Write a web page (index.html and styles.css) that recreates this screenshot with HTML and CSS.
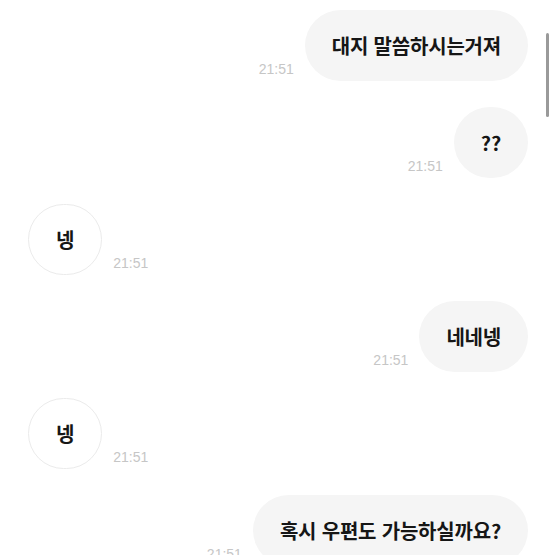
FILE: index.html
```html
<!DOCTYPE html>
<html lang="ko">
<head>
<meta charset="utf-8">
<link rel="stylesheet" href="styles.css">
</head>
<body>
<div class="chat">
  <div class="row me"><span class="time">21:51</span><div class="bubble">대지 말씀하시는거져</div></div>
  <div class="row me"><span class="time">21:51</span><div class="bubble">??</div></div>
  <div class="row them"><div class="bubble">넹</div><span class="time">21:51</span></div>
  <div class="row me"><span class="time">21:51</span><div class="bubble">네네넹</div></div>
  <div class="row them"><div class="bubble">넹</div><span class="time">21:51</span></div>
  <div class="row me"><span class="time">21:51</span><div class="bubble">혹시 우편도 가능하실까요?</div></div>
</div>
<div class="scrollbar"></div>
</body>
</html>
```
FILE: styles.css
```css
html, body {
  margin: 0;
  padding: 0;
  background: #ffffff;
  height: 555px;
  overflow: hidden;
}
body {
  font-family: "Noto Sans CJK KR", "Noto Sans", sans-serif;
}
.chat {
  display: flex;
  flex-direction: column;
  gap: 26px;
  padding: 10px 27px 0 28px;
}
.row {
  display: flex;
  align-items: flex-end;
  gap: 11px;
}
.row.me {
  justify-content: flex-end;
}
.bubble {
  height: 71px;
  box-sizing: border-box;
  padding: 0 27px;
  min-width: 72px;
  display: flex;
  align-items: center;
  justify-content: center;
  border-radius: 36px;
  font-size: 20px;
  font-weight: 700;
  color: #161616;
  letter-spacing: -0.2px;
}
.me .bubble {
  background: #f5f5f5;
}
.them .bubble {
  background: #ffffff;
  border: 1px solid #ebebeb;
}
.time {
  font-family: "Liberation Sans", Arial, sans-serif;
  font-size: 14px;
  color: #c6c6c6;
  line-height: 1;
  padding-bottom: 5px;
}
.scrollbar {
  position: absolute;
  left: 546px;
  top: 33px;
  width: 3px;
  height: 84px;
  border-radius: 2px;
  background: #9a9a9a;
}
```
